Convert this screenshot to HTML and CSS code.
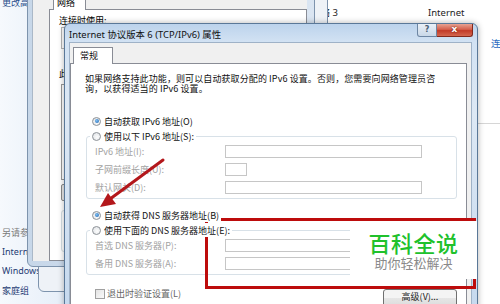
FILE: index.html
```html
<!DOCTYPE html>
<html lang="zh-CN">

<head>
    <meta charset="UTF-8">
    <meta name="viewport" content="width=device-width, initial-scale=1.0">
    <title>Internet 协议版本 6 (TCP/IPv6) 属性</title>
    <link rel="stylesheet" href="styles.css">
</head>

<body>
    <div class="desktop">

        <!-- explorer window in the back -->
        <div class="nav">
            <div class="nav-top">更改高级共享设置</div>
            <div class="nav-bottom">
                <div class="nav-head">另请参阅</div>
                <div class="nav-link">Internet 选项</div>
                <div class="nav-link">Windows 防火墙</div>
                <div class="nav-link">家庭组</div>
            </div>
        </div>
        <div class="explorer">
            <div class="explorer-row">
                <span class="col-name">网络 3</span>
                <span class="col-type">Internet</span>
            </div>
            <div class="tree-row"><span class="tree-line"></span><span class="tree-text">连接</span></div>
            <div class="explorer-sep"></div>
        </div>

        <!-- other dialogs behind -->
        <div class="win status-win"></div>
        <div class="win props-win">
            <div class="props-client">
                <div class="props-tabs"><span class="props-tab">网络</span></div>
                <div class="props-panel">
                    <div class="props-label">连接时使用:</div>
                    <div class="props-box"></div>
                    <div class="props-label second">此连接使用下列项目(O):</div>
                    <div class="props-list"></div>
                    <div class="props-btn"></div>
                    <div class="props-desc"></div>
                </div>
            </div>
        </div>

        <!-- IPv6 dialog -->
        <div class="dialog">
            <div class="titlebar">
                <span class="title">Internet 协议版本 6 (TCP/IPv6) 属性</span>
                <div class="caption-btns">
                    <span class="cap-btn help">?</span>
                    <span class="cap-btn close">x</span>
                </div>
            </div>
            <div class="client">
                <div class="tabs"><span class="tab">常规</span></div>
                <div class="tab-panel">
                    <p class="intro">如果网络支持此功能，则可以自动获取分配的 IPv6 设置。否则，您需要向网络管理员咨<br>询，以获得适当的 IPv6 设置。</p>

                    <div class="radio checked first"><span class="dot"></span>自动获取 IPv6 地址(O)</div>
                    <div class="radio legend"><span class="dot"></span>使用以下 IPv6 地址(S):</div>
                    <div class="group">
                        <div class="field"><span class="lbl">IPv6 地址(I):</span><span class="input"></span></div>
                        <div class="field"><span class="lbl">子网前缀长度(U):</span><span class="input small"></span></div>
                        <div class="field"><span class="lbl">默认网关(D):</span><span class="input"></span></div>
                    </div>

                    <div class="radio checked dns"><span class="dot"></span>自动获得 DNS 服务器地址(B)</div>
                    <div class="radio legend"><span class="dot"></span>使用下面的 DNS 服务器地址(E):</div>
                    <div class="group">
                        <div class="field"><span class="lbl">首选 DNS 服务器(P):</span><span class="input"></span></div>
                        <div class="field"><span class="lbl">备用 DNS 服务器(A):</span><span class="input"></span></div>
                    </div>

                    <div class="footer">
                        <div class="check"><span class="box"></span>退出时验证设置(L)</div>
                        <span class="btn">高级(V)...</span>
                    </div>
                </div>
            </div>
        </div>

        <!-- annotations -->
        <svg class="arrow" width="75" height="60" viewBox="0 0 75 60">
            <line x1="68" y1="5" x2="15" y2="44" stroke="#b3171b" stroke-width="3" stroke-linecap="round" />
            <polygon points="5,52 21,49 13,38" fill="#b3171b" />
        </svg>
        <div class="redbox"></div>
        <div class="brand">
            <div class="brand-name">百科全说</div>
            <div class="brand-sub">助你轻松解决</div>
        </div>
    </div>
</body>

</html>
```

FILE: styles.css
```css
/* styles.css */

body {
    margin: 0;
    background: #fff;
    font-family: "Noto Sans CJK SC", sans-serif;
}

.desktop {
    position: relative;
    width: 500px;
    height: 304px;
    overflow: hidden;
    background: #fff;
}

/* ---------- explorer behind ---------- */

.nav {
    position: absolute;
    left: 0;
    top: 0;
    bottom: 0;
    width: 70px;
    display: flex;
    flex-direction: column;
    background: linear-gradient(to right, #f6f9fd, #e4edf8);
    font-family: "Noto Sans", "Noto Sans CJK SC", sans-serif;
    font-size: 9px;
    white-space: nowrap;
}

.nav-top {
    color: #2a4f8c;
    padding-left: 2px;
    margin-top: -4px;
}

.nav-bottom {
    margin-top: auto;
    padding: 0 0 4px 2px;
    line-height: 19.3px;
}

.nav-head {
    color: #7a7a7a;
}

.nav-link {
    color: #1f3c74;
}

.explorer {
    position: absolute;
    left: 300px;
    top: 0;
    right: 0;
    bottom: 0;
    background: #fff;
    font-family: "Noto Sans", "Noto Sans CJK SC", sans-serif;
    font-size: 9.5px;
    color: #1c1c1c;
}

.explorer-row {
    display: flex;
    height: 24px;
    align-items: center;
}

.col-name {
    width: 117px;
    padding-left: 11px;
}

.tree-row {
    display: flex;
    align-items: center;
    height: 12px;
    margin-top: 13px;
    padding-left: 190px;
    white-space: nowrap;
}

.tree-line {
    width: 6px;
    border-top: 1px solid #a9b8c8;
}

.tree-text {
    color: #2d6cc0;
    margin-left: 1px;
}

.explorer-sep {
    margin-top: 74px;
    border-top: 1px solid #d6d6d6;
}

/* ---------- back windows ---------- */

.win {
    position: absolute;
    box-sizing: border-box;
    border: 1px solid #7d93ad;
    border-radius: 0 0 6px 6px;
    background: linear-gradient(to right, #c7d7e9, #dae5f2);
}

.status-win {
    left: 38px;
    top: -12px;
    width: 290px;
    height: 304px;
    padding: 0 6px 6px 6px;
    background: #eef2f7;
}

.props-win {
    left: 27px;
    top: -12px;
    width: 288px;
    height: 279px;
    padding: 0 7px 5px 4px;
}

.props-client {
    height: 100%;
    display: flex;
    flex-direction: column;
    background: #f0f0f0;
    padding-left: 16px;
    box-sizing: border-box;
    border-left: 1px solid #aab8c8;
}

.props-tabs {
    height: 20px;
    display: flex;
}

.props-tab {
    margin-left: 4px;
    width: 33px;
    height: 21px;
    box-sizing: border-box;
    border: 1px solid #898c95;
    border-bottom: none;
    background: #fff;
    font-size: 9px;
    line-height: 26px;
    padding-left: 3px;
    position: relative;
    z-index: 1;
}

.props-panel {
    flex: 1;
    background: #fff;
    border: 1px solid #898c95;
    padding: 5px 0 0 9px;
    font-size: 9px;
}

.props-label {
    line-height: 12px;
}

.props-label.second {
    margin-top: 19px;
}

.props-box {
    margin: 0 0 0 2px;
    height: 20px;
    border: 1px solid #b5b5b5;
}

.props-list {
    margin: 4px 0 0 2px;
    height: 94px;
    border: 1px solid #9a9a9a;
}

.props-btn {
    margin: 4px 0 0 2px;
    width: 60px;
    height: 15px;
    border: 1px solid #8a8a8a;
    border-radius: 2px;
    background: #e8e8e8;
}

.props-desc {
    margin: 9px 0 0 2px;
    height: 40px;
    border: 1px solid #d5dfe5;
    border-radius: 3px;
}

/* ---------- IPv6 dialog ---------- */

.dialog {
    position: absolute;
    left: 64px;
    top: 23px;
    width: 414px;
    height: 300px;
    box-sizing: border-box;
    border: 1px solid #5a7898;
    border-radius: 6px 6px 0 0;
    padding: 0 4px 0 4px;
    display: flex;
    flex-direction: column;
    background: linear-gradient(to bottom, #bcd3ec 0, #d2e2f3 18px, #dde8f4 90px, #c4d8ee 100%);
    box-shadow: 0 0 6px rgba(0, 0, 0, 0.3);
}

.titlebar {
    height: 18px;
    display: flex;
    align-items: flex-start;
}

.title {
    font-family: "Noto Sans", "Noto Sans CJK SC", sans-serif;
    font-size: 9.4px;
    line-height: 21px;
    color: #111;
    white-space: nowrap;
}

.caption-btns {
    margin-left: auto;
    display: flex;
}

.cap-btn {
    height: 13px;
    box-sizing: border-box;
    text-align: center;
    font-family: "DejaVu Sans", sans-serif;
    font-weight: bold;
    line-height: 11px;
}

.cap-btn.help {
    width: 20px;
    border: 1px solid #6d86a3;
    border-top: none;
    border-radius: 0 0 0 3px;
    background: linear-gradient(#eaf0f7, #c9d8e8);
    color: #4a5d73;
    font-size: 8px;
}

.cap-btn.close {
    width: 36px;
    border: 1px solid #83291c;
    border-top: none;
    border-left: none;
    border-radius: 0 0 3px 0;
    background: linear-gradient(#e7a292, #d5604c 45%, #c23b28 55%, #d4674f);
    color: #fff;
    font-size: 9px;
    text-shadow: 0 0 2px #5a140c;
}

.client {
    flex: 1;
    min-height: 0;
    margin-right: 1px;
    display: flex;
    flex-direction: column;
    background: #f0f0f0;
    border: 1px solid #9fb2c7;
    border-bottom: none;
    padding: 4px 4px 0 0;
    font-size: 9px;
    color: #111;
}

.tabs {
    display: flex;
}

.tab {
    margin: 0 0 -1px 3px;
    width: 40px;
    height: 17px;
    box-sizing: border-box;
    border: 1px solid #898c95;
    border-bottom: none;
    background: #fff;
    padding-left: 6px;
    line-height: 16px;
    position: relative;
    z-index: 1;
}

.tab-panel {
    flex: 1;
    display: flex;
    flex-direction: column;
    background: #fff;
    border: 1px solid #898c95;
    padding: 10px 9px 0 15px;
}

.intro {
    margin: 0 0 0 -1px;
    line-height: 9.5px;
    letter-spacing: 0.1px;
    white-space: nowrap;
}

.radio {
    display: flex;
    align-items: center;
    gap: 3px;
    width: max-content;
    height: 14px;
    padding: 0 2px 0 2px;
    margin-left: 4px;
    white-space: nowrap;
    background: #fff;
    position: relative;
    z-index: 1;
}

.radio.first {
    margin-top: 21px;
}

.radio.dns {
    margin-top: 9px;
}

.radio.legend {
    margin-top: 1px;
}

.dot {
    width: 9px;
    height: 9px;
    box-sizing: border-box;
    border: 1px solid #8d9297;
    border-radius: 50%;
    background: radial-gradient(circle at 60% 60%, #fdfdfd, #dcdfe3);
    display: flex;
    align-items: center;
    justify-content: center;
}

.radio.checked .dot::after {
    content: "";
    width: 4px;
    height: 4px;
    border-radius: 50%;
    background: radial-gradient(circle at 40% 40%, #7fc0f2, #1a5fae);
}

.group {
    margin-top: -7px;
    display: flex;
    flex-direction: column;
    gap: 5px;
    border: 1px solid #d8e1e8;
    border-radius: 3px;
    padding: 8px 0 4px 8px;
}

.field {
    display: flex;
    align-items: center;
    height: 13px;
}

.lbl {
    width: 130px;
    color: #a2a2a2;
    white-space: nowrap;
}

.input {
    width: 197px;
    height: 13px;
    box-sizing: border-box;
    border: 1px solid #c6c6c6;
    background: #fff;
}

.input.small {
    width: 22px;
}

.footer {
    margin-top: 14px;
    display: flex;
    align-items: flex-start;
    justify-content: space-between;
}

.check {
    display: flex;
    align-items: center;
    gap: 2px;
    margin-left: 9px;
    line-height: 10px;
    color: #666;
}

.box {
    width: 10px;
    height: 10px;
    box-sizing: border-box;
    border: 1px solid #a0a0a0;
    background: linear-gradient(135deg, #e3e3e3, #fafafa);
}

.btn {
    width: 74px;
    height: 18px;
    box-sizing: border-box;
    border: 1px solid #707070;
    border-radius: 3px;
    background: linear-gradient(#f4f4f4 50%, #e6e6e6 50%, #dcdcdc);
    text-align: center;
    line-height: 14px;
    color: #222;
}

/* ---------- annotations ---------- */

.arrow {
    position: absolute;
    left: 95px;
    top: 155px;
}

.redbox {
    position: absolute;
    left: 205px;
    top: 218px;
    width: 271px;
    height: 71px;
    box-sizing: border-box;
    border: 3px solid #bd0c0c;
}

.brand {
    position: absolute;
    left: 350px;
    top: 221px;
    width: 127px;
    height: 58px;
    background: #fff;
    text-align: center;
}

.brand-name {
    margin-top: 9px;
    font-size: 22px;
    line-height: 24px;
    font-weight: 500;
    color: #20c12c;
    letter-spacing: 0.5px;
}

.brand-sub {
    font-size: 13px;
    line-height: 18px;
    color: #8a8a8a;
}
```
